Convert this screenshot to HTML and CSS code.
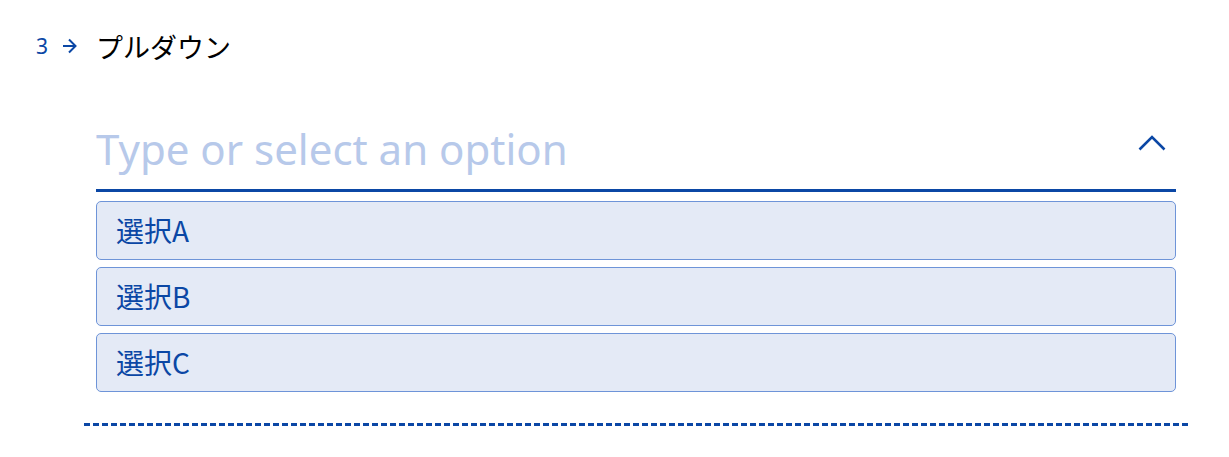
FILE: index.html
```html
<!DOCTYPE html>
<html lang="ja">
<head>
<meta charset="utf-8">
<title>プルダウン</title>
<link rel="stylesheet" href="styles.css">
</head>
<body>
<div class="page">
  <div class="q-head">
    <span class="q-num">3</span>
    <svg class="q-arrow" width="15" height="16" viewBox="0 0 15 16" aria-hidden="true">
      <line x1="1" y1="8" x2="13.5" y2="8"/>
      <polyline points="7,1.5 13.5,8 7,14.5"/>
    </svg>
    <span class="q-title">プルダウン</span>
  </div>
  <div class="q-body">
    <div class="combo">
      <div class="combo-input">
        <span class="placeholder">Type or select an option</span>
        <svg class="chev" width="28" height="16" viewBox="0 0 28 16" aria-hidden="true">
          <polyline points="1.5,14.5 14,2 26.5,14.5"/>
        </svg>
      </div>
      <ul class="options">
        <li class="option">選択A</li>
        <li class="option">選択B</li>
        <li class="option">選択C</li>
      </ul>
    </div>
  </div>
</div>
</body>
</html>
```

FILE: styles.css
```css
body {
  margin: 0;
  background: #ffffff;
  font-family: "Noto Sans", "Noto Sans CJK JP", sans-serif;
}

.page {
  width: 1152px;
  padding: 26px 0 0 36px;
}

.q-head {
  display: flex;
  align-items: center;
  height: 40px;
}

.q-num {
  font-size: 21px;
  line-height: 1;
  color: #0b47a5;
}

.q-arrow {
  margin-left: 14px;
  fill: none;
  stroke: #0b47a5;
  stroke-width: 2;
}

.q-title {
  margin-left: 19px;
  font-family: "Noto Sans CJK JP", sans-serif;
  font-size: 27px;
  line-height: 1;
  color: #000000;
}

.q-body {
  margin: 62px 0 0 48px;
  padding: 0 12px 34px;
  background: repeating-linear-gradient(to right, #0b47a5 0 6px, transparent 6px 9px) left bottom / 100% 3px no-repeat;
}

.combo-input {
  display: flex;
  align-items: flex-start;
  justify-content: space-between;
  height: 61px;
  border-bottom: 3px solid #0b47a5;
}

.placeholder {
  font-size: 42px;
  line-height: 42px;
  color: #b7c9ea;
  white-space: nowrap;
}

.chev {
  margin: 7px 10px 0 0;
  fill: none;
  stroke: #0b47a5;
  stroke-width: 2.6;
}

.options {
  list-style: none;
  margin: 9px 0 0;
  padding: 0;
  display: flex;
  flex-direction: column;
  gap: 7px;
}

.option {
  height: 57px;
  padding-left: 19px;
  border: 1px solid #6e94d8;
  border-radius: 5px;
  background: #e4eaf6;
  font-family: "Noto Sans CJK JP", sans-serif;
  font-size: 28px;
  line-height: 57px;
  color: #0b47a5;
}
```
